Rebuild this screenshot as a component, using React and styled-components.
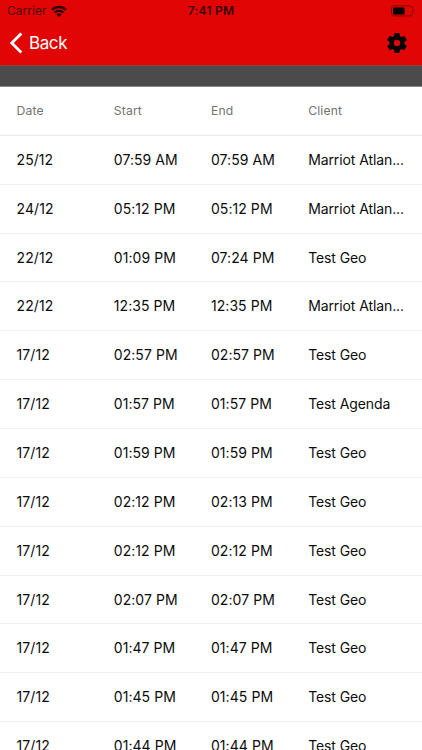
import { memo } from "react";
import styled, { createGlobalStyle } from "styled-components";

const GlobalStyle = createGlobalStyle`
    * {
        box-sizing: border-box;
    }

    body {
        margin: 0;
        background-color: #fff;
        font-family: Inter, "Liberation Sans", sans-serif;
    }
`;

const StScreen = styled.div`
    display: flex;
    flex-direction: column;
    height: 750px;
    overflow: hidden;
    background-color: #fff;
`;
const StTop = styled.header`
    flex: none;
    height: 65px;
    background-color: #e10605;
`;
const StStatus = styled.div`
    display: grid;
    grid-template-columns: 1fr auto 1fr;
    align-items: center;
    height: 22px;
    padding: 0 7px;
    color: #4a0202;
    font-size: 12px;
    line-height: 22px;
`;
const StCarrier = styled.div`
    display: flex;
    align-items: center;
    gap: 4px;
    letter-spacing: 0.05px;
`;
const StTime = styled.span`
    color: #350202;
    font-weight: 600;
    letter-spacing: 0.25px;
`;
const StBattery = styled.svg`
    justify-self: end;
`;
const StNav = styled.nav`
    display: flex;
    align-items: center;
    justify-content: space-between;
    height: 43px;
    padding: 0 13px 2px 9px;
`;
const StButton = styled.button`
    display: flex;
    align-items: center;
    gap: 6px;
    padding: 0;
    border: 0;
    background: none;
    color: #fff;
    font: inherit;
    font-size: 17px;
    line-height: 22px;
    letter-spacing: -0.4px;
    cursor: pointer;
`;
const StBar = styled.div`
    flex: none;
    height: 22px;
    border-top: 1px solid #8d3f3e;
    border-bottom: 1px solid #8a8a8a;
    background-color: #4b4b4b;
`;
const StRow = styled.div`
    display: grid;
    grid-template-columns: repeat(4, 97.2px);
    flex: none;
    align-items: center;
    height: ${({ $head }) => ($head ? "48.9px" : "48.87px")};
    padding-left: 16.6px;
    border-bottom: 1px solid ${({ $head }) => ($head ? "#e9e9e9" : "#f1f1f1")};
    color: ${({ $head }) => ($head ? "#737373" : "#0c0c0c")};
    font-size: ${({ $head }) => ($head ? "12.2px" : "14px")};
    letter-spacing: ${({ $head }) => ($head ? "0.15px" : "0.06px")};
    line-height: 18px;

    & > :last-child {
        letter-spacing: ${({ $head }) => ($head ? "0.15px" : "-0.1px")};
    }
`;
const StCell = styled.span`
    white-space: nowrap;
`;

const columns = ["Date", "Start", "End", "Client"];

const visits = [
    ["25/12", "07:59 AM", "07:59 AM", "Marriot Atlan..."],
    ["24/12", "05:12 PM", "05:12 PM", "Marriot Atlan..."],
    ["22/12", "01:09 PM", "07:24 PM", "Test Geo"],
    ["22/12", "12:35 PM", "12:35 PM", "Marriot Atlan..."],
    ["17/12", "02:57 PM", "02:57 PM", "Test Geo"],
    ["17/12", "01:57 PM", "01:57 PM", "Test Agenda"],
    ["17/12", "01:59 PM", "01:59 PM", "Test Geo"],
    ["17/12", "02:12 PM", "02:13 PM", "Test Geo"],
    ["17/12", "02:12 PM", "02:12 PM", "Test Geo"],
    ["17/12", "02:07 PM", "02:07 PM", "Test Geo"],
    ["17/12", "01:47 PM", "01:47 PM", "Test Geo"],
    ["17/12", "01:45 PM", "01:45 PM", "Test Geo"],
    ["17/12", "01:44 PM", "01:44 PM", "Test Geo"],
];

const Row = memo(({ cells, head = false }) => (
    <StRow $head={head}>
        {cells.map((cell, i) => (
            <StCell key={columns[i]}>{cell}</StCell>
        ))}
    </StRow>
));

const WifiIcon = () => (
    <svg width="16" height="12" viewBox="0 0 16 12" fill="none" stroke="#280101" strokeWidth="2.4">
        <path d="M1.1 4.8a9.9 9.9 0 0 1 13.8 0" />
        <path d="M3.6 7.7a6.3 6.3 0 0 1 8.8 0" />
        <path d="M8 12 5.4 9.5a3.7 3.7 0 0 1 5.2 0z" fill="#280101" stroke="none" />
    </svg>
);

const BatteryIcon = () => (
    <StBattery width="24" height="12" viewBox="0 0 24 12">
        <rect x="0.5" y="0.9" width="21" height="10" rx="2.6" fill="none" stroke="#8c0403" />
        <rect x="2" y="2.4" width="11.6" height="7" rx="1.2" fill="#000" />
        <path d="M22.6 4.2c1.4.5 1.4 3 0 3.5z" fill="#8c0403" />
    </StBattery>
);

const ChevronIcon = () => (
    <svg width="14" height="22" viewBox="0 0 14 22" fill="none" stroke="#fff" strokeWidth="2.8">
        <path d="M12.3 1.6 2.8 11l9.5 9.4" />
    </svg>
);

const GearIcon = () => (
    <svg width="24" height="24" viewBox="0 0 24 24" fill="#000">
        <path d="M19.43 12.98c.04-.32.07-.64.07-.98s-.03-.66-.07-.98l2.11-1.65c.19-.15.24-.42.12-.64l-2-3.46c-.12-.22-.39-.3-.61-.22l-2.49 1c-.52-.4-1.08-.73-1.69-.98l-.38-2.65A.488.488 0 0 0 14 2h-4c-.25 0-.46.18-.49.42l-.38 2.65c-.61.25-1.17.59-1.69.98l-2.49-1c-.23-.09-.49 0-.61.22l-2 3.46c-.13.22-.07.49.12.64l2.11 1.65c-.04.32-.07.65-.07.98s.03.66.07.98l-2.11 1.65c-.19.15-.24.42-.12.64l2 3.46c.12.22.39.3.61.22l2.49-1c.52.4 1.08.73 1.69.98l.38 2.65c.03.24.24.42.49.42h4c.25 0 .46-.18.49-.42l.38-2.65c.61-.25 1.17-.59 1.69-.98l2.49 1c.23.09.49 0 .61-.22l2-3.46c.12-.22.07-.49-.12-.64l-2.11-1.65zM12 15.2a3.2 3.2 0 1 1 0-6.4 3.2 3.2 0 0 1 0 6.4z" />
    </svg>
);

export default function App() {
    return (
        <>
            <GlobalStyle />
            <StScreen>
                <StTop>
                    <StStatus>
                        <StCarrier>
                            Carrier
                            <WifiIcon />
                        </StCarrier>
                        <StTime>7:41 PM</StTime>
                        <BatteryIcon />
                    </StStatus>
                    <StNav>
                        <StButton>
                            <ChevronIcon />
                            Back
                        </StButton>
                        <StButton aria-label="Settings">
                            <GearIcon />
                        </StButton>
                    </StNav>
                </StTop>
                <StBar />
                <Row cells={columns} head />
                {visits.map((cells, i) => (
                    <Row key={i} cells={cells} />
                ))}
            </StScreen>
        </>
    );
}
